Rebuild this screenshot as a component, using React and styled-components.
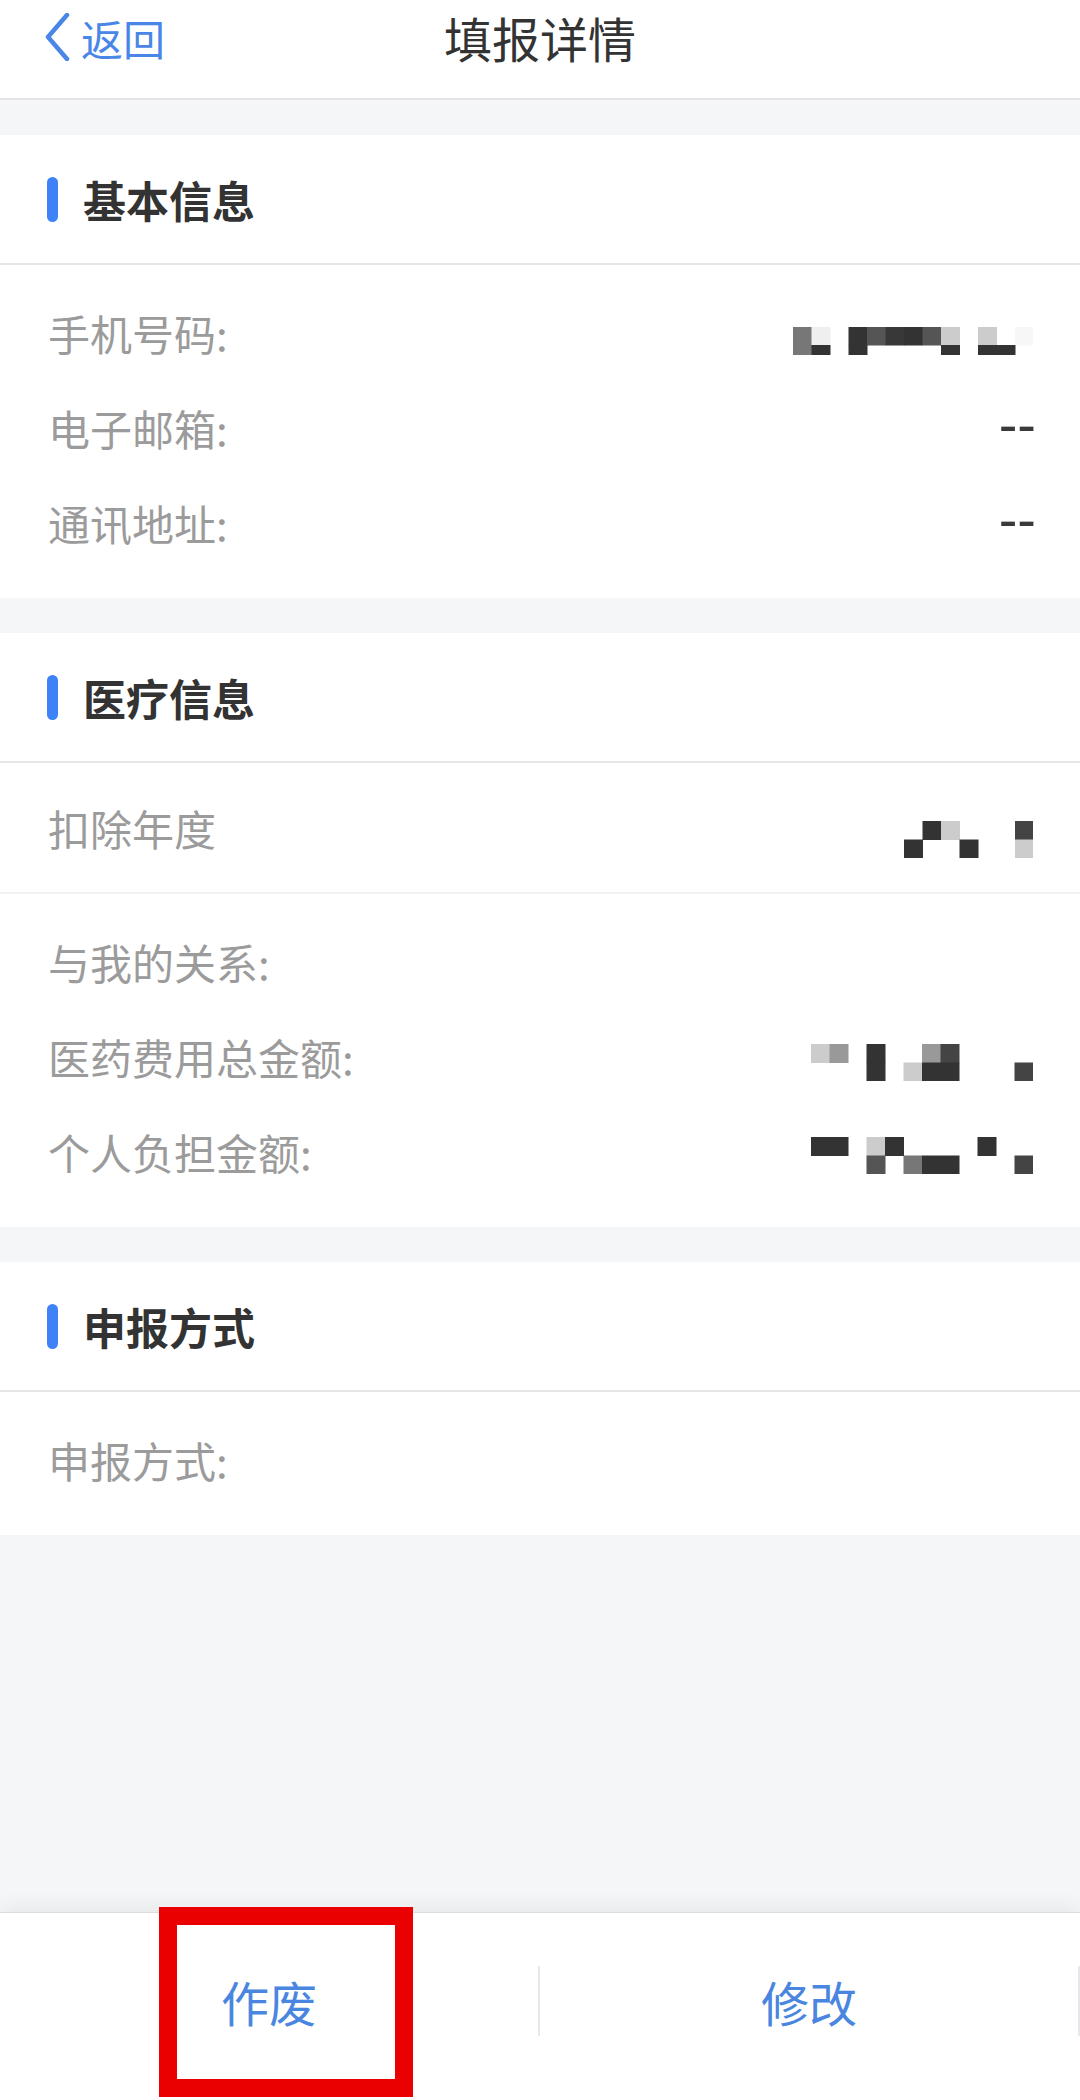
import React from "react";
import styled, { createGlobalStyle } from "styled-components";

const Global = createGlobalStyle`
  html, body { margin: 0; padding: 0; background: #f5f6f8; }
  body { font-family: "Noto Sans CJK SC", "Noto Sans", sans-serif; }
  * { box-sizing: border-box; }
`;

const Page = styled.div`
  width: 1080px;
  height: 2100px;
  display: flex;
  flex-direction: column;
  background: #f5f6f8;
  overflow: hidden;
`;

const NavBar = styled.header`
  height: 100px;
  flex-shrink: 0;
  background: #fff;
  border-bottom: 2px solid #e3e3e6;
  display: grid;
  grid-template-columns: 1fr auto 1fr;
  align-items: start;
  padding: 0 43px;
`;

const Back = styled.div`
  display: flex;
  align-items: center;
  gap: 10px;
  height: 74px;
  color: #4a86e8;
  font-size: 42px;
`;

const NavTitle = styled.h1`
  margin: 0;
  height: 74px;
  line-height: 74px;
  font-size: 48px;
  font-weight: 400;
  color: #333;
`;

const Section = styled.section`
  background: #fff;
  margin-top: 35px;
  flex-shrink: 0;
`;

const SectionHead = styled.div`
  height: 130px;
  display: flex;
  align-items: center;
  gap: 25px;
  padding-left: 47px;
  border-bottom: 2px solid #e6e6e9;
  font-size: 43px;
  font-weight: 700;
  color: #333;
`;

const Bar = styled.span`
  width: 11px;
  height: 45px;
  border-radius: 6px;
  background: #3d82f6;
`;

const Body = styled.div`
  padding: 20px 47px 28px 48px;
`;

const Row = styled.div`
  height: ${(p) => (p.$tall ? "131px" : "95px")};
  display: flex;
  justify-content: space-between;
  align-items: center;
  padding: ${(p) => (p.$tall ? "0 47px 0 48px" : "0")};
  border-bottom: ${(p) => (p.$tall ? "2px solid #f1f1f3" : "none")};
`;

const Label = styled.span`
  font-size: 42px;
  color: #9b9b9b;
`;

const TextValue = styled.span`
  font-family: "Liberation Sans", Arial, sans-serif;
  font-size: 56px;
  line-height: 1;
  color: #3a3a3a;
  margin-right: -3px;
  margin-top: -6px;
`;

const MosaicSvg = styled.svg`
  display: block;
  margin-top: ${(p) => p.$drop * 2}px;
`;

const CELL = 18.5;

function Mosaic({ data }) {
  const { cols, rows, cells, drop } = data;
  const w = cols * CELL;
  const h = rows.reduce((a, b) => a + b, 0);
  const y0 = (r) => rows.slice(0, r).reduce((a, b) => a + b, 0);
  return (
    <MosaicSvg $drop={drop} width={w} height={h} viewBox={`0 0 ${w} ${h}`}>
      {cells.map(([c, r, color, span = 1], i) => (
        <rect key={i} x={c * CELL} y={y0(r)} width={CELL * span + 0.5} height={rows[r] + 0.5} fill={color} />
      ))}
    </MosaicSvg>
  );
}

const phone = {
  cols: 13,
  rows: [18, 10],
  drop: 8,
  cells: [
    [0, 0, "#777"], [1, 0, "#efefef"], [3, 0, "#333"], [4, 0, "#555"], [5, 0, "#383838"],
    [6, 0, "#333"], [7, 0, "#555"], [8, 0, "#ccc"], [10, 0, "#ccc"], [12, 0, "#f7f7f7"],
    [0, 1, "#777"], [1, 1, "#333"], [3, 1, "#333"], [8, 1, "#333"], [10, 1, "#333", 2],
  ],
};

const year = {
  cols: 7,
  rows: [18.5, 18.5],
  drop: 12,
  cells: [
    [1, 0, "#333"], [2, 0, "#ccc"], [6, 0, "#444"],
    [0, 1, "#333"], [3, 1, "#333"], [6, 1, "#ccc"],
  ],
};

const total = {
  cols: 12,
  rows: [18.5, 18.5],
  drop: 6,
  cells: [
    [0, 0, "#ccc"], [1, 0, "#999"], [3, 0, "#333"], [6, 0, "#999"], [7, 0, "#444"],
    [3, 1, "#333"], [5, 1, "#ccc"], [6, 1, "#333", 2], [11, 1, "#444"],
  ],
};

const personal = {
  cols: 12,
  rows: [18.5, 18.5],
  drop: 4,
  cells: [
    [0, 0, "#333", 2], [3, 0, "#ccc"], [4, 0, "#333"], [9, 0, "#333"],
    [3, 1, "#555"], [5, 1, "#777"], [6, 1, "#333", 2], [11, 1, "#444"],
  ],
};

const Spacer = styled.div`
  flex: 1;
`;

const BottomBar = styled.footer`
  height: 188px;
  flex-shrink: 0;
  background: #fff;
  border-top: 1px solid #dcdcde;
  box-shadow: 0 -6px 18px rgba(0, 0, 0, 0.06);
  display: flex;
  align-items: center;
  padding-bottom: 12px;
`;

const Action = styled.div`
  position: relative;
  width: 538px;
  height: 100%;
  display: flex;
  align-items: center;
  justify-content: center;
  font-size: 48px;
  color: #4a86e0;
`;

const Divider = styled.span`
  width: 2px;
  height: 70px;
  background: #e8e8ea;
`;

const Highlight = styled.span`
  position: absolute;
  left: 159px;
  top: -6px;
  width: 254px;
  height: 190px;
  border: 18px solid #ea0000;
  pointer-events: none;
`;

function Chevron() {
  return (
    <svg width="28" height="48" viewBox="0 0 28 48" fill="none">
      <polyline points="24,2 5,24 24,46" stroke="#4a86e8" strokeWidth="4.5" strokeLinecap="round" strokeLinejoin="round" />
    </svg>
  );
}

export default function App() {
  return (
    <>
      <Global />
      <Page>
        <NavBar>
          <Back>
            <Chevron />
            返回
          </Back>
          <NavTitle>填报详情</NavTitle>
          <span />
        </NavBar>

        <Section>
          <SectionHead>
            <Bar />
            基本信息
          </SectionHead>
          <Body>
            <Row>
              <Label>手机号码:</Label>
              <Mosaic data={phone} />
            </Row>
            <Row>
              <Label>电子邮箱:</Label>
              <TextValue>--</TextValue>
            </Row>
            <Row>
              <Label>通讯地址:</Label>
              <TextValue>--</TextValue>
            </Row>
          </Body>
        </Section>

        <Section>
          <SectionHead>
            <Bar />
            医疗信息
          </SectionHead>
          <Row $tall>
            <Label>扣除年度</Label>
            <Mosaic data={year} />
          </Row>
          <Body>
            <Row>
              <Label>与我的关系:</Label>
            </Row>
            <Row>
              <Label>医药费用总金额:</Label>
              <Mosaic data={total} />
            </Row>
            <Row>
              <Label>个人负担金额:</Label>
              <Mosaic data={personal} />
            </Row>
          </Body>
        </Section>

        <Section>
          <SectionHead>
            <Bar />
            申报方式
          </SectionHead>
          <Body>
            <Row>
              <Label>申报方式:</Label>
            </Row>
          </Body>
        </Section>

        <Spacer />

        <BottomBar>
          <Action>
            作废
            <Highlight />
          </Action>
          <Divider />
          <Action>修改</Action>
          <Divider />
        </BottomBar>
      </Page>
    </>
  );
}
